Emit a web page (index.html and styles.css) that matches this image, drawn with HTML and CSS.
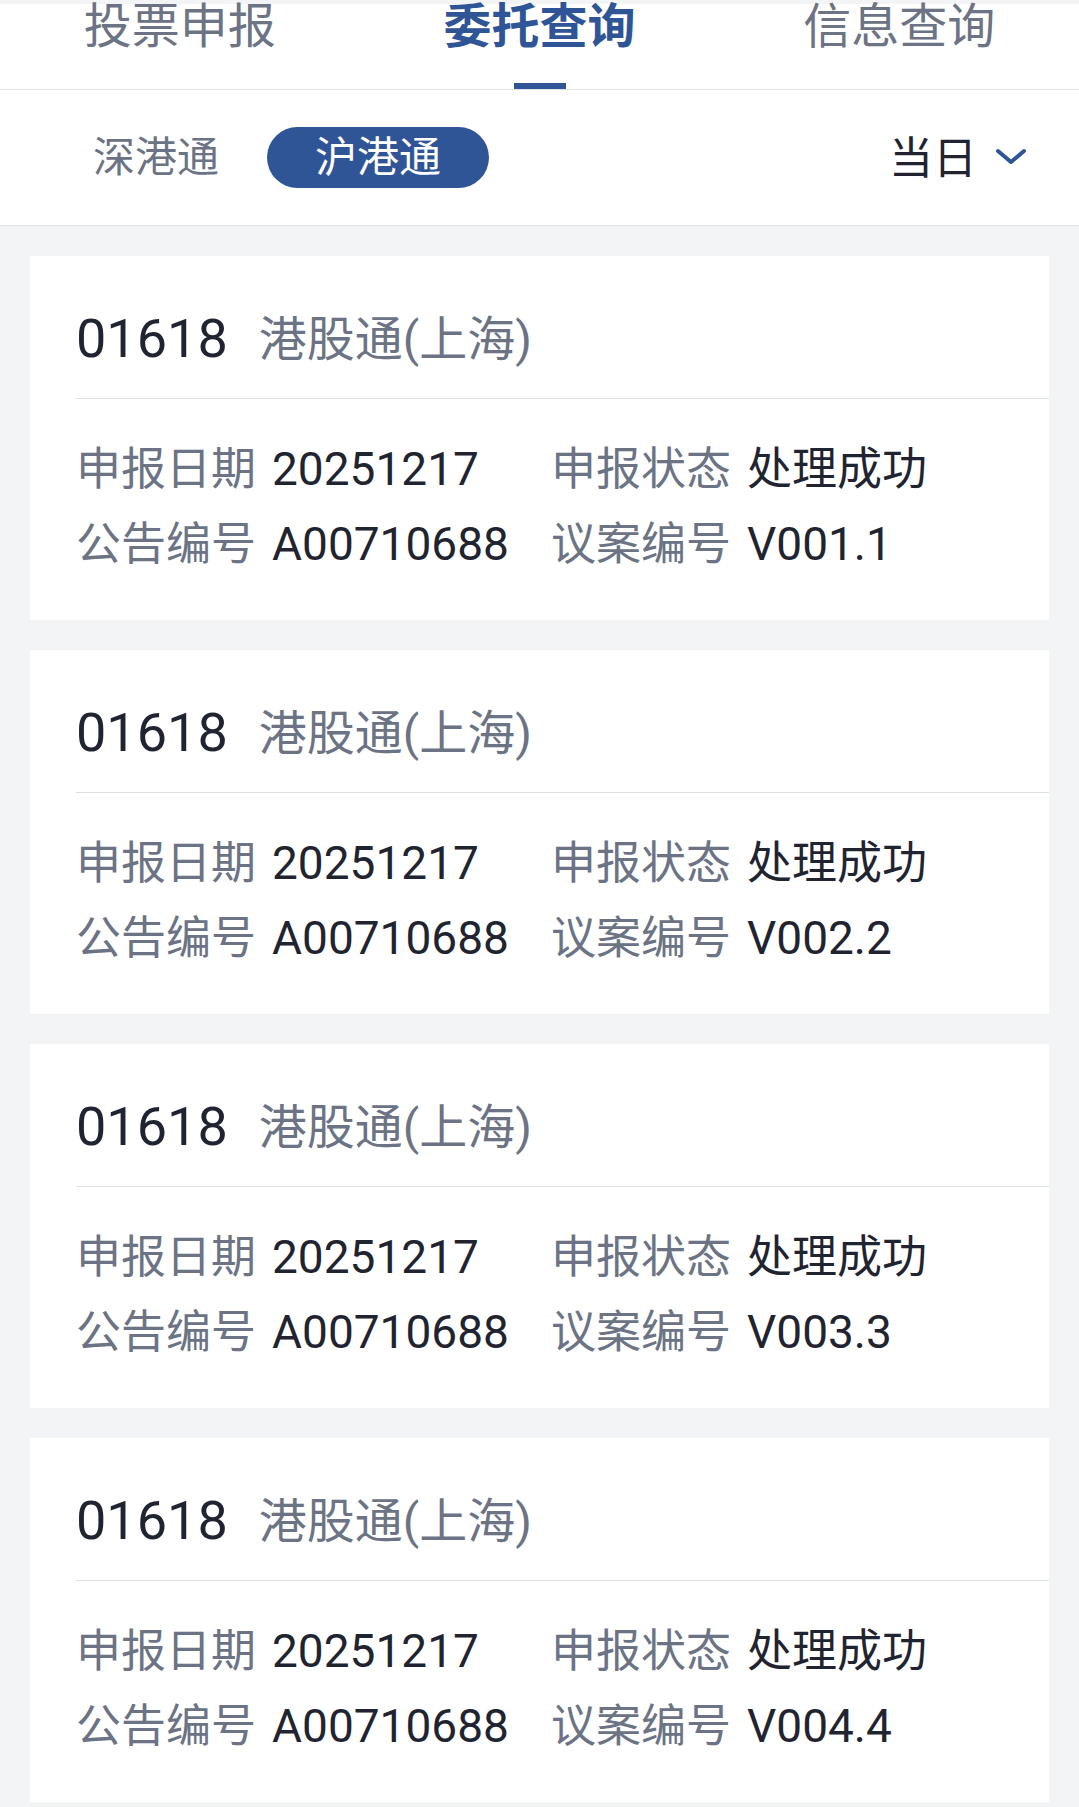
FILE: index.html
```html
<!DOCTYPE html>
<html lang="zh">
  <head>
    <meta charset="UTF-8" />
    <meta name="viewport" content="width=device-width, initial-scale=1.0" />
    <title>委托查询</title>
    <link rel="stylesheet" href="styles.css">
  </head>
  <body>
    <div class="tabs">
      <div class="tab"><span>投票申报</span></div>
      <div class="tab active"><span>委托查询</span><i class="bar"></i></div>
      <div class="tab"><span>信息查询</span></div>
    </div>
    <div class="filter">
      <div class="market">深港通</div>
      <div class="market on">沪港通</div>
      <div class="range">
        <span>当日</span>
        <svg width="32" height="18" viewBox="0 0 32 18">
          <polyline points="3,3 16,14 29,3" fill="none" stroke="#2f5597" stroke-width="4" stroke-linecap="round" stroke-linejoin="round" />
        </svg>
      </div>
    </div>

    <div class="list">
      <div class="card">
        <div class="card-head"><span class="code">01618</span><span class="name">港股通(上海)</span></div>
        <div class="fields">
          <div class="field"><span class="lbl">申报日期</span><span class="val">20251217</span></div>
          <div class="field"><span class="lbl">申报状态</span><span class="val cn">处理成功</span></div>
          <div class="field"><span class="lbl">公告编号</span><span class="val">A00710688</span></div>
          <div class="field"><span class="lbl">议案编号</span><span class="val">V001.1</span></div>
        </div>
      </div>
      <div class="card">
        <div class="card-head"><span class="code">01618</span><span class="name">港股通(上海)</span></div>
        <div class="fields">
          <div class="field"><span class="lbl">申报日期</span><span class="val">20251217</span></div>
          <div class="field"><span class="lbl">申报状态</span><span class="val cn">处理成功</span></div>
          <div class="field"><span class="lbl">公告编号</span><span class="val">A00710688</span></div>
          <div class="field"><span class="lbl">议案编号</span><span class="val">V002.2</span></div>
        </div>
      </div>
      <div class="card">
        <div class="card-head"><span class="code">01618</span><span class="name">港股通(上海)</span></div>
        <div class="fields">
          <div class="field"><span class="lbl">申报日期</span><span class="val">20251217</span></div>
          <div class="field"><span class="lbl">申报状态</span><span class="val cn">处理成功</span></div>
          <div class="field"><span class="lbl">公告编号</span><span class="val">A00710688</span></div>
          <div class="field"><span class="lbl">议案编号</span><span class="val">V003.3</span></div>
        </div>
      </div>
      <div class="card">
        <div class="card-head"><span class="code">01618</span><span class="name">港股通(上海)</span></div>
        <div class="fields">
          <div class="field"><span class="lbl">申报日期</span><span class="val">20251217</span></div>
          <div class="field"><span class="lbl">申报状态</span><span class="val cn">处理成功</span></div>
          <div class="field"><span class="lbl">公告编号</span><span class="val">A00710688</span></div>
          <div class="field"><span class="lbl">议案编号</span><span class="val">V004.4</span></div>
        </div>
      </div>
    </div>
  </body>
</html>
```

FILE: styles.css
```css
body {
  margin: 0;
  padding-top: 4px;
  background: #f3f4f6;
  font-family: Roboto, "Noto Sans CJK SC", sans-serif;
  color: #1f2430;
}
.tabs {
  display: flex;
  height: 85px;
  background: #fff;
  border-bottom: 1px solid #e2e3e6;
}
.tab {
  flex: 1;
  display: flex;
  flex-direction: column;
  align-items: center;
  font-size: 48px;
  line-height: 46px;
  color: #6b7384;
}
.tab.active {
  color: #2f5597;
  font-weight: bold;
}
.tab .bar {
  display: block;
  margin-top: auto;
  width: 52px;
  height: 6px;
  background: #2f5597;
}
.filter {
  display: flex;
  align-items: center;
  height: 135px;
  padding: 0 52px 0 93px;
  background: #fff;
  border-bottom: 1px solid #e2e3e6;
}
.market {
  font-size: 42px;
  line-height: 61px;
  color: #6b7384;
  margin-right: 48px;
}
.market.on {
  padding: 0 48px;
  border-radius: 31px;
  background: #2f5597;
  color: #fff;
}
.range {
  margin-left: auto;
  padding-bottom: 6px;
  display: flex;
  align-items: center;
  gap: 18px;
  font-size: 44px;
  color: #1f2430;
}
.range svg {
  margin-top: 4px;
}
.list {
  padding: 30px 30px 0;
}
.card {
  background: #fff;
  padding-left: 46px;
  margin-bottom: 30px;
}
.card-head {
  display: flex;
  align-items: center;
  gap: 31px;
  height: 60px;
  padding: 52px 0 30px;
  border-bottom: 1px solid #e0e1e4;
}
.code {
  font-size: 54px;
}
.name {
  font-size: 48px;
  padding-bottom: 7px;
  color: #6b7384;
}
.fields {
  display: grid;
  grid-template-columns: 475px 1fr;
  padding: 33px 0 38px;
  line-height: 75px;
  font-size: 45px;
}
.field {
  display: flex;
  gap: 16px;
}
.lbl {
  color: #6b7384;
}
.val {
  font-size: 46px;
}
.val.cn {
  font-size: 45px;
}
```
